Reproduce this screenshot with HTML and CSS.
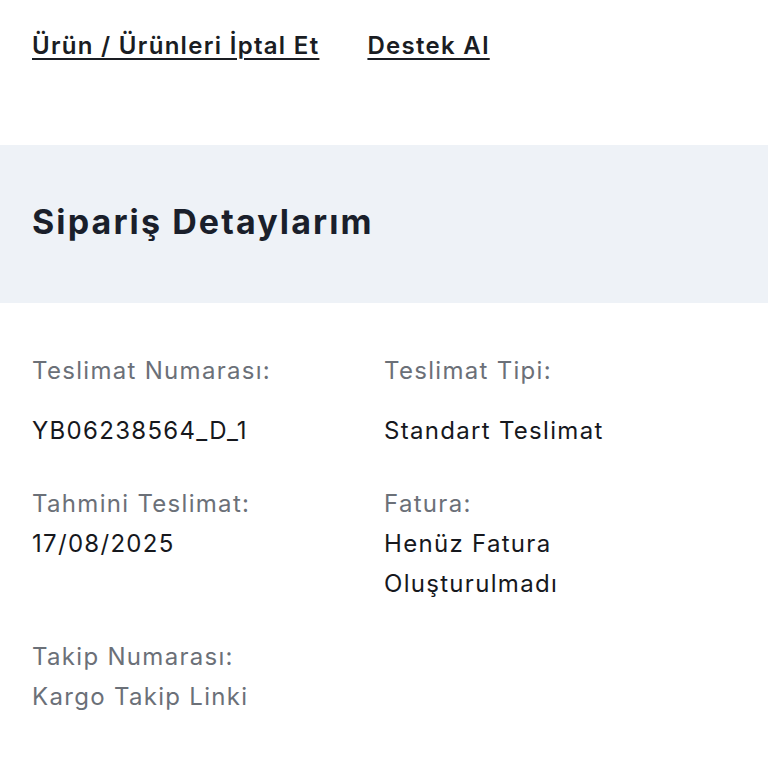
FILE: index.html
```html
<!DOCTYPE html>
<html lang="tr">
<head>
  <meta charset="UTF-8" />
  <title>Sipariş Detaylarım</title>
  <link rel="stylesheet" href="styles.css">
</head>
<body>

  <div class="top-links">
    <a href="#" class="top-link">Ürün / Ürünleri İptal Et</a>
    <a href="#" class="top-link">Destek Al</a>
  </div>

  <div class="section-head">
    <h1 class="section-title">Sipariş Detaylarım</h1>
  </div>

  <div class="details">
    <div class="detail detail-first">
      <div class="detail-label">Teslimat Numarası:</div>
      <div class="detail-value">YB06238564_D_1</div>
    </div>
    <div class="detail detail-first">
      <div class="detail-label">Teslimat Tipi:</div>
      <div class="detail-value">Standart Teslimat</div>
    </div>
    <div class="detail">
      <div class="detail-label">Tahmini Teslimat:</div>
      <div class="detail-value">17/08/2025</div>
    </div>
    <div class="detail">
      <div class="detail-label">Fatura:</div>
      <div class="detail-value">Henüz Fatura<br>Oluşturulmadı</div>
    </div>
    <div class="detail">
      <div class="detail-label">Takip Numarası:</div>
      <div class="detail-value detail-muted">Kargo Takip Linki</div>
    </div>
  </div>

</body>
</html>
```

FILE: styles.css
```css
body {
  margin: 0;
  background: #ffffff;
  color: #111827;
  font-family: Inter, "Noto Sans", Arial, sans-serif;
}
.top-links {
  display: flex;
  gap: 48px;
  padding: 26px 32px 0;
  height: 145px;
  box-sizing: border-box;
}
.top-link {
  font-size: 24px;
  line-height: 40px;
  font-weight: 600;
  letter-spacing: 1.3px;
  color: #1a1d23;
  text-decoration: underline;
  text-decoration-thickness: 2px;
  text-underline-offset: 4px;
}
.section-head {
  background: #eef2f7;
  padding: 57px 32px 61px;
}
.section-title {
  margin: 0;
  font-size: 34px;
  line-height: 40px;
  font-weight: 700;
  letter-spacing: 2.1px;
  color: #1a1f2b;
}
.details {
  display: grid;
  grid-template-columns: 1fr 1fr;
  row-gap: 33px;
  padding: 48px 32px;
}
.detail {
  font-size: 24px;
  line-height: 40px;
  letter-spacing: 1.3px;
}
.detail-label { color: #6b7078; }
.detail-value { color: #16181d; }
.detail-first .detail-value { margin-top: 20px; }
.detail-muted { color: #6b7078; }
```
